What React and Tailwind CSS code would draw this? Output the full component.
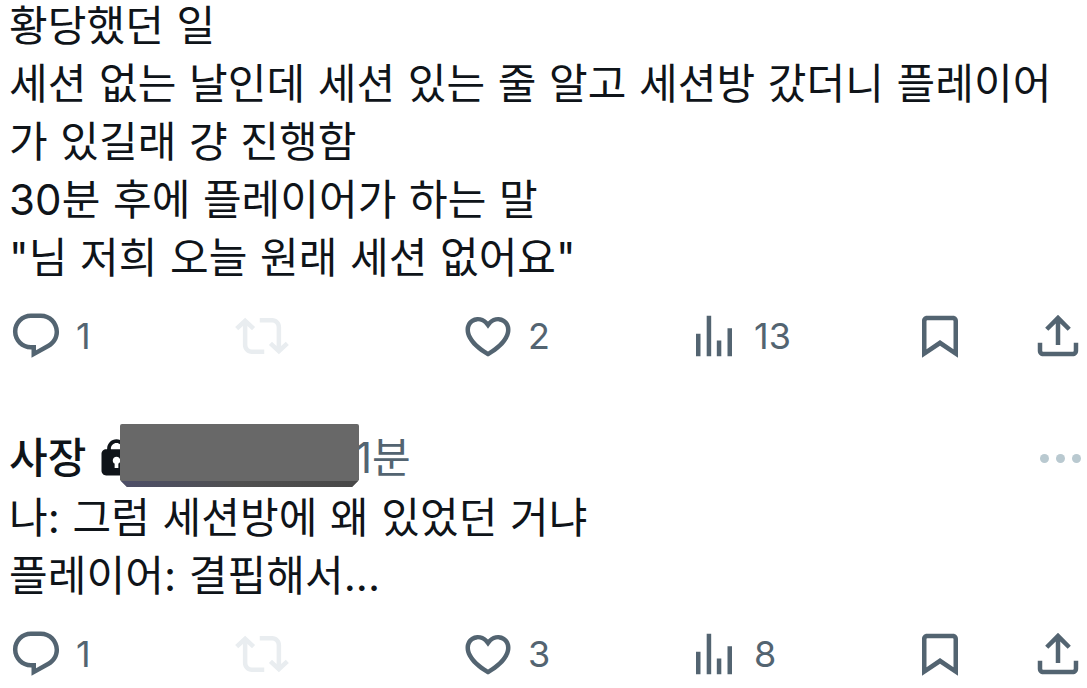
const icons = {
  reply:
    "M1.751 10c0-4.42 3.584-8 8.005-8h4.366c4.49 0 8.129 3.64 8.129 8.13 0 2.96-1.607 5.68-4.196 7.11l-8.054 4.46v-3.69h-.067c-4.49.1-8.183-3.51-8.183-8.01zm8.005-6c-3.317 0-6.005 2.69-6.005 6 0 3.37 2.77 6.08 6.138 6.01l.351-.01h1.761v2.3l5.087-2.81c1.951-1.08 3.163-3.13 3.163-5.36 0-3.39-2.744-6.13-6.129-6.13H9.756z",
  repost:
    "M4.5 3.88l4.432 4.14-1.364 1.46L5.5 7.55V16c0 1.1.896 2 2 2H13v2H7.5c-2.209 0-4-1.79-4-4V7.55L1.432 9.48.068 8.02 4.5 3.88zM16.5 6H11V4h5.5c2.209 0 4 1.79 4 4v8.45l2.068-1.93 1.364 1.46-4.432 4.14-4.432-4.14 1.364-1.46 2.068 1.93V8c0-1.1-.896-2-2-2z",
  like: "M16.697 5.5c-1.222-.06-2.679.51-3.89 2.16l-.805 1.09-.806-1.09C9.984 6.01 8.526 5.44 7.304 5.5c-1.243.07-2.349.78-2.91 1.91-.552 1.12-.633 2.78.479 4.82 1.074 1.97 3.257 4.27 7.129 6.61 3.87-2.34 6.052-4.64 7.126-6.61 1.111-2.04 1.03-3.7.477-4.82-.561-1.13-1.666-1.84-2.908-1.91zm4.187 7.69c-1.351 2.48-4.001 5.12-8.379 7.67l-.503.3-.504-.3c-4.379-2.55-7.029-5.19-8.382-7.67-1.36-2.5-1.41-4.86-.514-6.67.887-1.79 2.647-2.91 4.601-3.01 1.651-.09 3.368.56 4.798 2.01 1.429-1.45 3.146-2.1 4.796-2.01 1.954.1 3.714 1.22 4.601 3.01.896 1.81.846 4.17-.514 6.67z",
  views:
    "M8.75 21V3h2v18h-2zM18 21V8.5h2V21h-2zM4 21l.004-10h2L6 21H4zm9.248 0v-7h2v7h-2z",
  bookmark:
    "M4 5.2C4 3.98 4.98 3 6.2 3h11.6C19.02 3 20 3.98 20 5.2v16.5l-8-5.4-8 5.4V5.2zM6.3 5c-.17 0-.3.13-.3.3v12.6l6-4.1 6 4.1V5.3c0-.17-.13-.3-.3-.3H6.3z",
  share:
    "M12 2.59l5.7 5.7-1.41 1.42L13 6.41V16h-2V6.41l-3.3 3.3-1.41-1.42L12 2.59zM21 15l-.02 3.51c0 1.38-1.12 2.49-2.5 2.49H5.5C4.11 21 3 19.88 3 18.5V15h2v3.5c0 .28.22.5.5.5h12.98c.28 0 .5-.22.5-.5L19 15h2z",
  lock: "M17.5 7H17v-.25c0-2.76-2.24-5-5-5s-5 2.24-5 5V7h-.5C5.12 7 4 8.12 4 9.5v9C4 19.88 5.12 21 6.5 21h11c1.38 0 2.5-1.12 2.5-2.5v-9C20 8.12 18.88 7 17.5 7zM13 14.73V17h-2v-2.27c-.59-.34-1-.99-1-1.73 0-1.1.9-2 2-2 1.1 0 2 .9 2 2 0 .74-.41 1.39-1 1.73zM15 7H9v-.25c0-1.66 1.34-3 3-3s3 1.34 3 3V7z",
};

const Icon = ({ name, className = "size-[54px]" }) => (
  <svg viewBox="0 0 24 24" fill="currentColor" className={`shrink-0 ${className}`}>
    <path d={icons[name]} />
  </svg>
);

const Action = ({ icon, count, className = "" }) => (
  <button type="button" className={`flex items-center gap-[13px] ${className}`}>
    <Icon name={icon} />
    {count && <span className="text-[36px] leading-[54px]">{count}</span>}
  </button>
);

const Actions = ({ replies, likes, views }) => (
  <div className="grid grid-cols-[226px_226px_226px_226px_118px_54px] h-[54px] pl-[9px] text-[#536471]">
    <Action icon="reply" count={replies} />
    <Action icon="repost" className="text-[#e9edf0]" />
    <Action icon="like" count={likes} />
    <Action icon="views" count={views} />
    <Action icon="bookmark" />
    <Action icon="share" />
  </div>
);

const Text = ({ lines }) => (
  <div className="pl-[9px] text-[42px] leading-[58px] tracking-[0.1px] [word-spacing:0.6px] whitespace-nowrap">
    {lines.map((line) => (
      <p key={line}>{line}</p>
    ))}
  </div>
);

const App = () => {
  return (
    <main className="w-[1087px] h-[688px] overflow-hidden bg-white text-[#0f1419] font-[Inter,'Noto_Sans_CJK_KR',sans-serif]">
      <article className="h-[428px] overflow-hidden">
        <div className="-mt-[3px] mb-[22px]">
          <Text
            lines={[
              "황당했던 일",
              "세션 없는 날인데 세션 있는 줄 알고 세션방 갔더니 플레이어",
              "가 있길래 걍 진행함",
              "30분 후에 플레이어가 하는 말",
              '"님 저희 오늘 원래 세션 없어요"',
            ]}
          />
        </div>
        <Actions replies="1" likes="2" views="13" />
      </article>

      <article>
        <header className="relative flex items-center h-[60px] pl-[9px] pr-[6px] text-[42px] leading-[60px]">
          <span className="w-[85px] font-medium">사장</span>
          <Icon name="lock" className="size-[45px]" />
          {/* hidden handle */}
          <div className="absolute left-[120px] -top-[4px] flex flex-col w-[239px] h-[63px] bg-[#686868] rounded-t-[2px] [clip-path:polygon(0_0,100%_0,100%_56px,232px_100%,7px_100%,0_56px)]">
            <div className="mt-auto h-[6px] bg-linear-to-r from-[#4d4e68] via-[#505050] to-[#484848]" />
          </div>
          <span className="ml-[216px] text-[#536471]">1분</span>
          <div className="flex gap-[7px] ml-auto">
            <i className="size-[9px] rounded-full bg-[#b9c9d0]" />
            <i className="size-[9px] rounded-full bg-[#b9c9d0]" />
            <i className="size-[9px] rounded-full bg-[#b9c9d0]" />
          </div>
        </header>
        <div className="pt-px mb-[22px]">
          <Text lines={["나: 그럼 세션방에 왜 있었던 거냐", "플레이어: 결핍해서..."]} />
        </div>
        <Actions replies="1" likes="3" views="8" />
      </article>
    </main>
  );
};

export default App;
